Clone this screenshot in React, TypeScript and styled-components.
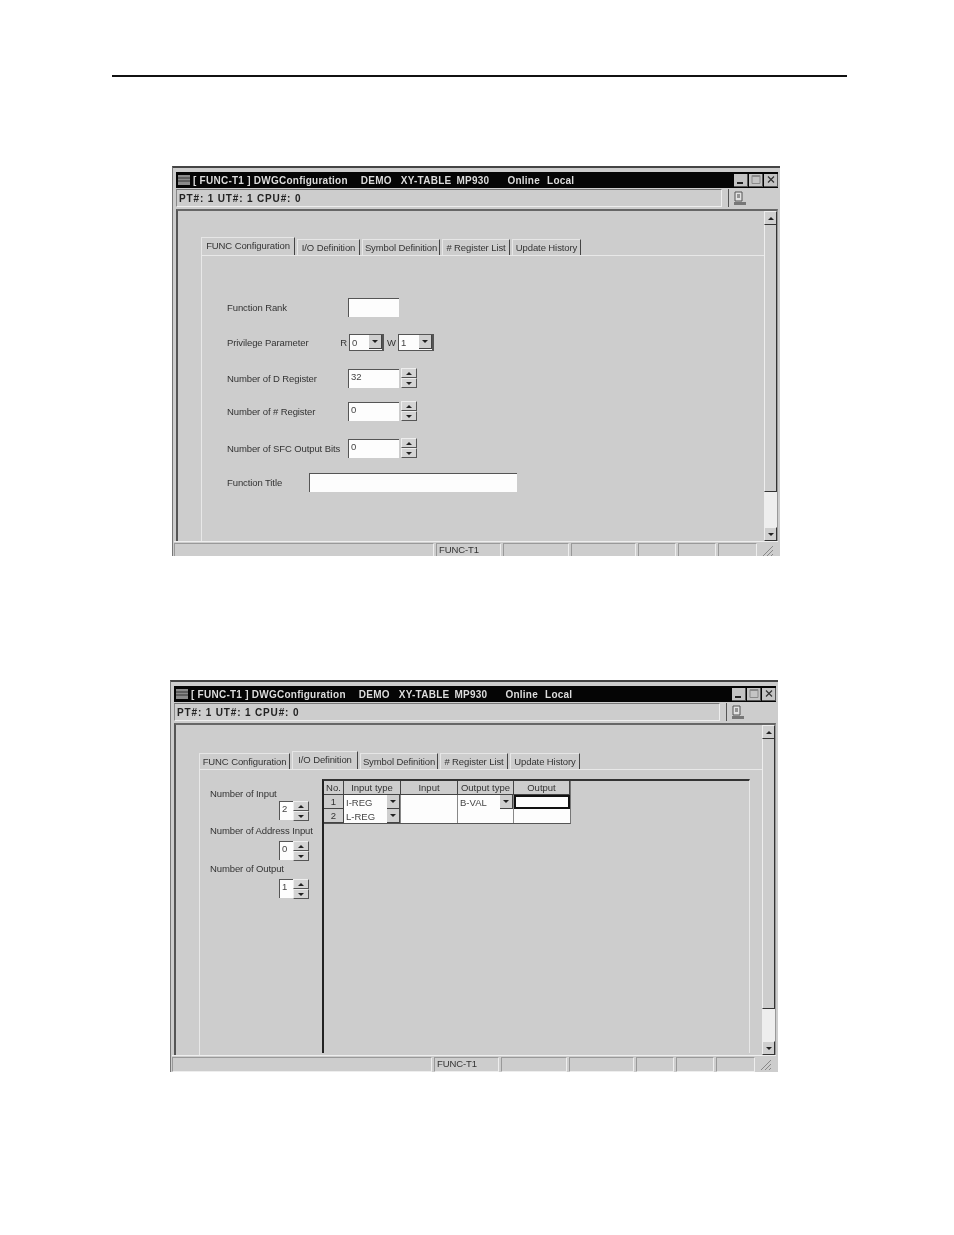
import React from 'react';
import styled, { createGlobalStyle } from 'styled-components';

const GlobalStyle = createGlobalStyle`
  html, body {
    margin: 0;
    background: #fff;
  }
`;

const Page = styled.div`
  position: relative;
  width: 954px;
  height: 1235px;
  overflow: hidden;
  font-family: "Liberation Sans", Arial, sans-serif;
  color: #333;
`;

const Rule = styled.div`
  margin: 75px 0 0 112px;
  width: 735px;
  height: 2px;
  background: #111;
`;

const Win = styled.div<{ $left: number; $top: number; $height: number }>`
  box-sizing: border-box;
  width: 608px;
  height: ${p => p.$height}px;
  margin: ${p => p.$top}px 0 0 ${p => p.$left}px;
  padding: 4px 2px 0 3px;
  background: #cdcdcd;
  border-top: 2px solid #444;
  border-left: 1px solid #777;
  display: flex;
  flex-direction: column;
  overflow: hidden;
  filter: blur(0.7px);
`;

const TitleBar = styled.div`
  flex: none;
  height: 16px;
  background: #050505;
  color: #dcdcdc;
  font-size: 10px;
  font-weight: bold;
  letter-spacing: 0.25px;
  display: flex;
  align-items: center;
  padding: 0 0 0 2px;
`;

const TitlePart = styled.span<{ $gap: number }>`
  margin-left: ${p => p.$gap}px;
  white-space: pre;
`;

const CaptionButtons = styled.div`
  margin-left: auto;
  display: flex;
  align-items: center;
  gap: 1px;
`;

const CaptionButton = styled.div`
  width: 14px;
  height: 13px;
  background: #c4c4c4;
  border-right: 1px solid #555;
  border-bottom: 1px solid #555;
  box-sizing: border-box;
  color: #222;
  display: flex;
  align-items: center;
  justify-content: center;
`;

const InfoRow = styled.div`
  flex: none;
  height: 21px;
  box-sizing: border-box;
  padding: 1px 0 2px;
  display: flex;
  align-items: stretch;
`;

const InfoField = styled.div`
  flex: none;
  width: 546px;
  box-sizing: border-box;
  padding-left: 2px;
  border-top: 1px solid #777;
  border-left: 1px solid #888;
  border-right: 1px solid #eee;
  border-bottom: 1px solid #eee;
  font-size: 10px;
  font-weight: bold;
  letter-spacing: 0.85px;
  color: #222;
  display: flex;
  align-items: center;
`;

const InfoIcon = styled.div`
  margin-left: 6px;
  padding-left: 4px;
  border-left: 1px solid #555;
  display: flex;
  align-items: center;
`;

const Client = styled.div`
  flex: none;
  height: 332px;
  box-sizing: border-box;
  border-top: 2px solid #666;
  border-left: 2px solid #555;
  border-right: 1px solid #999;
  display: flex;
`;

const Content = styled.div`
  flex: 1;
  min-width: 0;
  box-sizing: border-box;
  padding: 26px 0 0 23px;
  display: flex;
  flex-direction: column;
`;

const TabStrip = styled.div`
  flex: none;
  height: 18px;
  display: flex;
  align-items: flex-end;
  gap: 2px;
`;

const Tab = styled.div<{ $width: number; $active?: boolean }>`
  box-sizing: border-box;
  width: ${p => p.$width}px;
  height: ${p => (p.$active ? 18 : 16)}px;
  border-top: 1px solid #e6e6e6;
  border-left: 1px solid #e6e6e6;
  border-right: 1px solid #444;
  font-size: 9.5px;
  letter-spacing: -0.1px;
  color: #333;
  white-space: nowrap;
  display: flex;
  align-items: center;
  justify-content: center;
  padding-bottom: ${p => (p.$active ? 3 : 1)}px;
`;

const Pane = styled.div`
  flex: 1;
  min-height: 0;
  border-top: 1px solid #e8e8e8;
  border-left: 1px solid #e8e8e8;
  display: flex;
`;

const Form = styled.div`
  padding: 41px 0 0 25px;
  display: flex;
  flex-direction: column;
`;

const FormRow = styled.div<{ $gap: number }>`
  height: 20px;
  margin-top: ${p => p.$gap}px;
  display: flex;
  align-items: center;
`;

const Label = styled.div<{ $width?: number }>`
  width: ${p => (p.$width ? `${p.$width}px` : 'auto')};
  flex: none;
  font-size: 9.5px;
  line-height: 11px;
  letter-spacing: -0.1px;
  color: #333;
  white-space: nowrap;
`;

const Input = styled.div<{ $width: number }>`
  box-sizing: border-box;
  width: ${p => p.$width}px;
  height: 19px;
  background: #fdfdfd;
  border-top: 1px solid #555;
  border-left: 1px solid #555;
  padding-left: 2px;
  font-size: 9.5px;
  line-height: 13px;
  color: #444;
`;

const Spin = styled.div<{ $gap: number }>`
  width: 16px;
  height: 20px;
  margin-left: ${p => p.$gap}px;
  display: flex;
  flex-direction: column;
`;

const SpinButton = styled.div`
  flex: 1;
  box-sizing: border-box;
  background: #d4d4d4;
  border-top: 1px solid #eee;
  border-left: 1px solid #eee;
  border-right: 1px solid #555;
  border-bottom: 1px solid #555;
  display: flex;
  align-items: center;
  justify-content: center;
`;

const Arrow = styled.span<{ $up?: boolean }>`
  width: 0;
  height: 0;
  border-left: 3px solid transparent;
  border-right: 3px solid transparent;
  ${p => (p.$up ? 'border-bottom: 3px solid #222;' : 'border-top: 3px solid #222;')}
`;

const Select = styled.div<{ $width: number }>`
  box-sizing: border-box;
  width: ${p => p.$width}px;
  height: 17px;
  background: #fdfdfd;
  border: 1px solid #555;
  border-right-width: 2px;
  display: flex;
  align-items: center;
  padding-left: 2px;
  font-size: 9.5px;
  color: #444;
`;

const DropButton = styled.div`
  margin-left: auto;
  width: 13px;
  height: 14px;
  box-sizing: border-box;
  background: #cfcfcf;
  border-right: 1px solid #444;
  border-bottom: 1px solid #444;
  display: flex;
  align-items: center;
  justify-content: center;
`;

const SmallLetter = styled.span<{ $width: number }>`
  width: ${p => p.$width}px;
  flex: none;
  font-size: 9.5px;
  color: #333;
  text-align: right;
  padding-right: 2px;
  box-sizing: border-box;
`;

const SideColumn = styled.div`
  flex: none;
  width: 99px;
  margin-left: 10px;
  padding-top: 18px;
  display: flex;
  flex-direction: column;
`;

const SideSpin = styled.div<{ $before: number; $after: number }>`
  align-self: flex-end;
  margin: ${p => p.$before}px 0 ${p => p.$after}px;
  display: flex;
`;

const GridFrame = styled.div`
  flex: none;
  box-sizing: border-box;
  width: 428px;
  height: 274px;
  margin: 9px 0 0 13px;
  border-top: 2px solid #333;
  border-left: 2px solid #222;
  border-right: 1px solid #e8e8e8;
`;

const Sheet = styled.div`
  display: grid;
  grid-template-columns: 20px 57px 57px 56px 56px;
  grid-auto-rows: 14px;
  width: 246px;
  background: #fdfdfd;
  border-bottom: 1px solid #555;
  border-right: 1px solid #777;
`;

const Head = styled.div`
  background: #cdcdcd;
  border-right: 1px solid #444;
  border-bottom: 1px solid #444;
  font-size: 9.5px;
  color: #333;
  text-align: center;
  line-height: 13px;
  box-sizing: border-box;
`;

const Cell = styled.div<{ $selected?: boolean; $border?: boolean }>`
  box-sizing: border-box;
  font-size: 9.5px;
  color: #444;
  padding-left: 2px;
  display: flex;
  align-items: center;
  white-space: nowrap;
  ${p => p.$border && 'border-right: 1px solid #888;'}
  ${p => p.$selected && 'border: 2px solid #111;'}
`;

const Track = styled.div`
  flex: none;
  width: 13px;
  background: #eeeeee;
  display: flex;
  flex-direction: column;
`;

const ScrollButton = styled.div`
  flex: none;
  height: 14px;
  box-sizing: border-box;
  background: #cfcfcf;
  border-top: 1px solid #eee;
  border-left: 1px solid #eee;
  border-right: 1px solid #333;
  border-bottom: 1px solid #333;
  display: flex;
  align-items: center;
  justify-content: center;
`;

const Thumb = styled.div<{ $height: number }>`
  flex: none;
  height: ${p => p.$height}px;
  box-sizing: border-box;
  background: #cdcdcd;
  border-left: 1px solid #eee;
  border-right: 1px solid #333;
  border-bottom: 1px solid #333;
`;

const Spacer = styled.div`
  flex: 1;
`;

const StatusBar = styled.div`
  flex: none;
  height: 17px;
  margin-left: -2px;
  border-top: 1px solid #eee;
  display: flex;
  gap: 2px;
  padding-top: 1px;
`;

const StatusPanel = styled.div<{ $width: number }>`
  flex: none;
  box-sizing: border-box;
  width: ${p => p.$width}px;
  height: 15px;
  padding-left: 2px;
  border-top: 1px solid #999;
  border-left: 1px solid #999;
  border-right: 1px solid #eee;
  border-bottom: 1px solid #eee;
  font-size: 9.5px;
  letter-spacing: -0.1px;
  color: #333;
  line-height: 12px;
`;

const Grip = styled.svg`
  flex: none;
  margin: 1px 0 0 2px;
`;

const MenuIcon = () => (
  <svg width="12" height="10" viewBox="0 0 12 10">
    <path d="M0 0h12v10H0z" fill="#8a8a8a" />
    <path d="M0 3h12M0 6h12" stroke="#333" />
  </svg>
);

const Caption = () => (
  <CaptionButtons>
    <CaptionButton>
      <svg width="10" height="9" viewBox="0 0 10 9"><path d="M1 7h6v2H1z" fill="#222" /></svg>
    </CaptionButton>
    <CaptionButton>
      <svg width="10" height="9" viewBox="0 0 10 9"><path d="M1 .5h8v8H1zM1 1.5h8" fill="none" stroke="#8a8a8a" /></svg>
    </CaptionButton>
    <CaptionButton>
      <svg width="10" height="9" viewBox="0 0 10 9"><path d="M2 1.5l6 6M8 1.5l-6 6" fill="none" stroke="#333" strokeWidth="1.2" /></svg>
    </CaptionButton>
  </CaptionButtons>
);

const SaveIcon = () => (
  <svg width="14" height="15" viewBox="0 0 14 15">
    <path d="M2 1h7v9H2z" fill="#e2e2e2" stroke="#555" />
    <path d="M4 4h3M4 6h3" stroke="#444" />
    <path d="M1 11h12v3H1z" fill="#777" />
  </svg>
);

const Spinner = ({ gap = 0 }: { gap?: number }) => (
  <Spin $gap={gap}>
    <SpinButton><Arrow $up /></SpinButton>
    <SpinButton><Arrow /></SpinButton>
  </Spin>
);

const Drop = () => (
  <DropButton><Arrow /></DropButton>
);

type WindowProps = {
  left: number;
  top: number;
  height: number;
  tabs: { label: string; width: number; active?: boolean }[];
  thumb: number;
  children: React.ReactNode;
};

const statusPanels = [260, 65, 66, 65, 38, 38, 39];

const DwgWindow = ({ left, top, height, tabs, thumb, children }: WindowProps) => (
  <Win $left={left} $top={top} $height={height}>
    <TitleBar>
      <MenuIcon />
      <TitlePart $gap={3}>[ FUNC-T1 ] DWGConfiguration</TitlePart>
      <TitlePart $gap={13}>DEMO</TitlePart>
      <TitlePart $gap={9}>XY-TABLE</TitlePart>
      <TitlePart $gap={5}>MP930</TitlePart>
      <TitlePart $gap={18}>Online</TitlePart>
      <TitlePart $gap={7}>Local</TitlePart>
      <Caption />
    </TitleBar>
    <InfoRow>
      <InfoField>PT#: 1 UT#: 1 CPU#: 0</InfoField>
      <InfoIcon><SaveIcon /></InfoIcon>
    </InfoRow>
    <Client>
      <Content>
        <TabStrip>
          {tabs.map(t => (
            <Tab key={t.label} $width={t.width} $active={t.active}>{t.label}</Tab>
          ))}
        </TabStrip>
        <Pane>{children}</Pane>
      </Content>
      <Track>
        <ScrollButton><Arrow $up /></ScrollButton>
        <Thumb $height={thumb} />
        <Spacer />
        <ScrollButton><Arrow /></ScrollButton>
      </Track>
    </Client>
    <StatusBar>
      {statusPanels.map((w, i) => (
        <StatusPanel key={i} $width={w}>{i === 1 ? 'FUNC-T1' : ''}</StatusPanel>
      ))}
      <Grip width="13" height="13" viewBox="0 0 13 13">
        <path d="M12 2L2 12M12 6l-6 6M12 10l-2 2" stroke="#888" />
      </Grip>
    </StatusBar>
  </Win>
);

const configTabs = [
  { label: 'FUNC Configuration', width: 94, active: true },
  { label: 'I/O Definition', width: 63 },
  { label: 'Symbol Definition', width: 78 },
  { label: '# Register List', width: 68 },
  { label: 'Update History', width: 69 },
];

const ioTabs = [
  { label: 'FUNC Configuration', width: 91 },
  { label: 'I/O Definition', width: 66, active: true },
  { label: 'Symbol Definition', width: 78 },
  { label: '# Register List', width: 68 },
  { label: 'Update History', width: 70 },
];

const heads = ['No.', 'Input type', 'Input', 'Output type', 'Output'];

export default function App() {
  return (
    <Page>
      <GlobalStyle />
      <Rule />
      <DwgWindow left={172} top={89} height={390} tabs={configTabs} thumb={267}>
        <Form>
          <FormRow $gap={0}>
            <Label $width={121}>Function Rank</Label>
            <Input $width={51} />
          </FormRow>
          <FormRow $gap={15}>
            <Label $width={109}>Privilege Parameter</Label>
            <SmallLetter $width={13}>R</SmallLetter>
            <Select $width={35}>0<Drop /></Select>
            <SmallLetter $width={14}>W</SmallLetter>
            <Select $width={36}>1<Drop /></Select>
          </FormRow>
          <FormRow $gap={16}>
            <Label $width={121}>Number of D Register</Label>
            <Input $width={51}>32</Input>
            <Spinner gap={2} />
          </FormRow>
          <FormRow $gap={13}>
            <Label $width={121}>Number of # Register</Label>
            <Input $width={51}>0</Input>
            <Spinner gap={2} />
          </FormRow>
          <FormRow $gap={17}>
            <Label $width={121}>Number of SFC Output Bits</Label>
            <Input $width={51}>0</Input>
            <Spinner gap={2} />
          </FormRow>
          <FormRow $gap={14}>
            <Label $width={82}>Function Title</Label>
            <Input $width={208} />
          </FormRow>
        </Form>
      </DwgWindow>
      <DwgWindow left={170} top={124} height={392} tabs={ioTabs} thumb={270}>
        <SideColumn>
          <Label>Number of Input</Label>
          <SideSpin $before={2} $after={4}><Input $width={14}>2</Input><Spinner /></SideSpin>
          <Label>Number of Address Input</Label>
          <SideSpin $before={5} $after={2}><Input $width={14}>0</Input><Spinner /></SideSpin>
          <Label>Number of Output</Label>
          <SideSpin $before={5} $after={0}><Input $width={14}>1</Input><Spinner /></SideSpin>
        </SideColumn>
        <GridFrame>
          <Sheet>
            {heads.map(h => <Head key={h}>{h}</Head>)}
            <Head>1</Head>
            <Cell $border>I-REG<Drop /></Cell>
            <Cell $border />
            <Cell $border>B-VAL<Drop /></Cell>
            <Cell $selected />
            <Head>2</Head>
            <Cell $border>L-REG<Drop /></Cell>
            <Cell $border />
            <Cell $border />
            <Cell />
          </Sheet>
        </GridFrame>
      </DwgWindow>
    </Page>
  );
}
